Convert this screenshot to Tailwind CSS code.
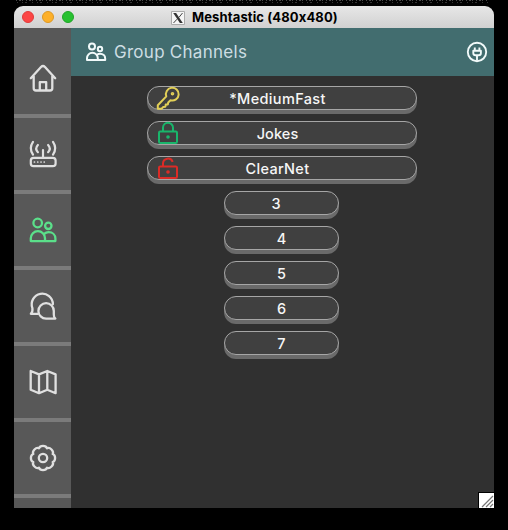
<!DOCTYPE html>
<html lang="en">
<head>
<meta charset="utf-8">
<title>Meshtastic</title>
<script src="https://cdn.jsdelivr.net/npm/@tailwindcss/browser@4"></script>
</head>
<body class="bg-black w-[508px] h-[530px] overflow-hidden font-['Inter',sans-serif]">
<svg class="block w-[508px] h-[6px]" viewBox="0 0 508 6"><g stroke="#555" fill="none"><path d="M16 .5H488" stroke-dasharray="1 2 2 1 1 3" stroke="#4a4a4a"/><path d="M17 2.5H488" stroke-dasharray="1 4 1 2 2 5" stroke="#333"/></g></svg>
<main class="ml-[14px] w-[480px] h-[502px] flex flex-col rounded-t-[9px] overflow-hidden">
  <div class="h-[22px] shrink-0 bg-linear-to-b from-[#e7e7e7] to-[#d1d1d1] flex items-center">
    <div class="flex gap-2 ml-2">
      <i class="size-3 rounded-full bg-[#fc4645] border border-[#df3c3b]"></i>
      <i class="size-3 rounded-full bg-[#fdb02a] border border-[#dc9824]"></i>
      <i class="size-3 rounded-full bg-[#28c131] border border-[#20a528]"></i>
    </div>
    <svg class="ml-[97px] size-[14px] mt-[2px] shrink-0" viewBox="0 0 14 14"><path d="M.5.5h13v13H.5z" fill="#f5f5f5" stroke="#aaa"/><path d="M2.2 2h2.9l6.7 10H8.9Z" fill="#333"/><path d="M11.5 2 8 6.3M6 8.2 2.5 12" stroke="#444" stroke-width="1"/></svg>
    <h1 class="ml-[7px] text-[13px] leading-[22px] font-bold text-black whitespace-nowrap tracking-[0.13px]">Meshtastic (480x480)</h1>
  </div>
  <div class="flex h-[480px] relative">
    <nav class="w-[57px] shrink-0 bg-[#585858] pt-[14px] flex flex-col overflow-hidden text-[#e0e0e0]">
      <svg class="shrink-0 w-[57px] h-[76px] border-b-4 border-[#7b7b7b]" viewBox="14 42 57 72" fill="none" stroke="currentColor" stroke-width="2.3" stroke-linejoin="round" stroke-linecap="round"><path d="M30.8 78.2 41 67q2-2 4 0l10.2 11.2M33.7 76v12.2q0 2.3 2.3 2.3h14q2.3 0 2.3-2.3V76M39.8 90v-7.8h6.4V90"/></svg>
      <svg class="shrink-0 w-[57px] h-[76px] border-b-4 border-[#7b7b7b]" viewBox="14 118 57 72" fill="none" stroke="currentColor" stroke-width="2.2" stroke-linecap="round"><rect x="30.8" y="157.8" width="24.8" height="8.4" rx="2.7"/><path d="M43 150v7M37.9 145q-3.4 3.6 0 7.2M33 141.8q-4.4 6.4 0 12.8M48.1 145q3.4 3.6 0 7.2M53 141.8q4.4 6.4 0 12.8"/><path d="M34.4 162h.1M37.7 162h.1M41 162h.1M44.2 162h.1" stroke-width="1.7"/></svg>
      <svg class="shrink-0 w-[57px] h-[76px] border-b-4 border-[#7b7b7b] text-[#5bdf8a]" viewBox="14 194 57 72" fill="none" stroke="currentColor" stroke-width="2.3" stroke-linejoin="round"><circle cx="37.7" cy="223" r="4.3"/><circle cx="48.3" cy="225.8" r="3.2"/><path d="M30.8 241.1v-2.8a7.1 7.1 0 0 1 14.2 0v2.8ZM44 234q2.2-1.8 4.6-1.8c4 0 6.8 2.6 6.8 6.4v2.5H45"/></svg>
      <svg class="shrink-0 w-[57px] h-[76px] border-b-4 border-[#7b7b7b]" viewBox="14 270 57 72" fill="none" stroke="currentColor" stroke-width="2.3" stroke-linejoin="round" stroke-linecap="round"><path d="M38 313.8h-7.2c1.6-1.4 2-3 1.6-5.7a10.6 10.6 0 1 1 20.5-3.8"/><path d="M53.8 311a7.7 7.7 0 1 0-7.6 7.6h9.2q-1.8-1.3-1.6-4.2Z"/></svg>
      <svg class="shrink-0 w-[57px] h-[76px] border-b-4 border-[#7b7b7b]" viewBox="14 346 57 72" fill="none" stroke="currentColor" stroke-width="2.3" stroke-linejoin="round"><path d="m30.7 371 8.3 3.4 8.3-3.4 8.3 3.4v18.8l-8.3-3.4-8.3 3.4-8.3-3.4ZM39 374.4v18.8M47.3 371v18.8"/></svg>
      <svg class="shrink-0 w-[57px] h-[76px] border-b-4 border-[#7b7b7b]" viewBox="-29 -36 57 72" fill="none" stroke="currentColor" stroke-width="2.3" stroke-linejoin="round"><circle r="4.2"/><path d="M9.7-4.02C12.9-3 12.9 3 9.7 4.02 11.25 6.9 6.9 11.25 4.02 9.7 3 12.9-3 12.9-4.02 9.7-6.9 11.25-11.25 6.9-9.7 4.02-12.9 3-12.9-3-9.7-4.02-11.25-6.9-6.9-11.25-4.02-9.7-3-12.9 3-12.9 4.02-9.7 6.9-11.25 11.25-6.9 9.7-4.02Z"/></svg>
    </nav>
    <section class="flex-1 bg-[#303030]">
      <header class="h-12 bg-[#426d6f] flex items-center text-[#f1fafa]">
        <svg class="ml-[14px] w-[22px] h-[22px]" viewBox="85 41 22 22" fill="none" stroke="currentColor" stroke-width="2" stroke-linejoin="round"><circle cx="92" cy="46.5" r="3"/><circle cx="100" cy="49" r="2.2"/><path d="M87 60v-1.8a5.4 5.4 0 0 1 10.8 0V60ZM97 54.8q1.4-1.1 3-1.1c3 0 5.2 2 5.2 4.7V60h-7.5"/></svg>
        <h2 class="ml-[7px] w-[136px] text-[17px] leading-6 whitespace-nowrap tracking-[0.27px] text-[#cddde3]">Group Channels</h2>
        <svg class="ml-auto mr-[6px] size-[22px]" viewBox="466 41 22 22" fill="none" stroke="currentColor" stroke-width="1.9"><circle cx="477" cy="52" r="9.2"/><path d="M474.8 47.5v3M479.4 47.5v3M477 55.3v5.5"/><path d="M473.3 50.7h7.6v2.3q0 2.3-2.3 2.3h-3q-2.3 0-2.3-2.3Z" stroke-linejoin="round"/></svg>
      </header>
      <div class="pt-[10px] pr-[1px] flex flex-col items-center gap-[11px] text-[14.5px] font-medium text-[#f6f6f6]">
        <button class="relative w-[270px] h-6 rounded-[12px] border border-[#a6a6a6] bg-[#404040] shadow-[0_4px_0_#6a6a6a] leading-[24px]"><svg class="absolute left-[7px] -top-px w-[26px] h-[26px]" viewBox="155 86 26 26" fill="none" stroke="#e2cf57" stroke-width="2" stroke-linejoin="round"><path d="M166.3 96.4a6.4 6.4 0 1 1 4.2 3.9l-2.3 2.2-.3 1.9-2.2.2-.3 2.1-2.1.2-1.7 1.8h-3.8v-3.4Z"/><circle cx="172.5" cy="93.8" r=".8" /></svg><span class="inline-block ml-[-9px] tracking-[0.35px]">*MediumFast</span></button>
        <button class="relative w-[270px] h-6 rounded-[12px] border border-[#a6a6a6] bg-[#404040] shadow-[0_4px_0_#6a6a6a] leading-[24px]"><svg class="absolute left-[7px] -top-px w-[26px] h-[26px]" viewBox="155 121 26 26" fill="none" stroke="#19b66b" stroke-width="2"><rect x="159" y="131.5" width="18" height="11.5" rx="1.2"/><path d="M163 131v-3.2a5 5 0 0 1 10 0v3.2"/><circle cx="168" cy="137" r="1.8" fill="#19b66b" stroke="none"/></svg><span class="inline-block ml-[-9px] tracking-[0.1px]">Jokes</span></button>
        <button class="relative w-[270px] h-6 rounded-[12px] border border-[#a6a6a6] bg-[#404040] shadow-[0_4px_0_#6a6a6a] leading-[24px]"><svg class="absolute left-[7px] -top-px w-[26px] h-[26px]" viewBox="155 156 26 26" fill="none" stroke="#dc2b26" stroke-width="2"><rect x="159" y="166.5" width="18" height="11.5" rx="1.2"/><path d="M163 166v-2.6a5 5 0 0 1 9.7-1.5"/><circle cx="168" cy="172" r="1.8" fill="#dc2b26" stroke="none"/></svg><span class="inline-block ml-[-9px] tracking-[0.3px]">ClearNet</span></button>
        <button class="mr-px w-[115px] h-6 rounded-[12px] border border-[#a6a6a6] bg-[#404040] shadow-[0_4px_0_#6a6a6a] leading-[24px] pr-[11px]">3</button>
        <button class="mr-px w-[115px] h-6 rounded-[12px] border border-[#a6a6a6] bg-[#404040] shadow-[0_4px_0_#6a6a6a] leading-[24px]">4</button>
        <button class="mr-px w-[115px] h-6 rounded-[12px] border border-[#a6a6a6] bg-[#404040] shadow-[0_4px_0_#6a6a6a] leading-[24px]">5</button>
        <button class="mr-px w-[115px] h-6 rounded-[12px] border border-[#a6a6a6] bg-[#404040] shadow-[0_4px_0_#6a6a6a] leading-[24px]">6</button>
        <button class="mr-px w-[115px] h-6 rounded-[12px] border border-[#a6a6a6] bg-[#404040] shadow-[0_4px_0_#6a6a6a] leading-[24px]">7</button>
      </div>
    </section>
    <svg class="absolute right-0 bottom-0 size-4" viewBox="0 0 16 16"><path d="M0 0h16v16H0z" fill="#000"/><path d="M1 1h15v15H1z" fill="#fff"/><path d="M4 15 15 4M8 15l7-7M12 15l3-3" stroke="#777" stroke-width="1.2"/></svg>
  </div>
</main>
</body>
</html>
